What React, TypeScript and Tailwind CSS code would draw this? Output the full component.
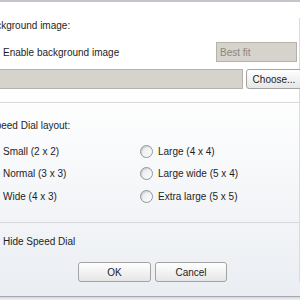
import React from "react";

const font = { fontFamily: '"Liberation Sans", Arial, sans-serif' };

function Radio() {
  return (
    <span className="inline-block h-[13px] w-[13px] shrink-0 rounded-full border border-[#8f969e] bg-gradient-to-br from-[#e4e6e9] to-white shadow-[inset_1px_1px_1px_rgba(0,0,0,0.12)]" />
  );
}

function Check() {
  return (
    <span className="inline-block h-[13px] w-[13px] shrink-0 border border-[#8f969e] bg-gradient-to-br from-[#e4e6e9] to-white" />
  );
}

function Btn({ children, w }: { children: React.ReactNode; w: string }) {
  return (
    <button
      className={`${w} h-[20px] rounded-[3px] border border-[#a3a3a3] bg-gradient-to-b from-white to-[#e6e6e6] text-[10px] text-[#222]`}
    >
      {children}
    </button>
  );
}

const left = ["Small (2 x 2)", "Normal (3 x 3)", "Wide (4 x 3)"];
const right = ["Large (4 x 4)", "Large wide (5 x 4)", "Extra large (5 x 5)"];

export default function App() {
  return (
    <div
      style={font}
      className="relative h-[300px] w-[300px] overflow-hidden bg-gradient-to-b from-white from-30% to-[#eaedf2] text-[10px] text-[#1e1e1e]"
    >
      <div className="h-[2px] bg-[#9aa0aa] opacity-60" />
      <div className="border-r border-[#d9dbe0]">
        {/* background image section */}
        <div className="ml-[-16px] mt-[16px] h-[16px] leading-[16px]">Background image:</div>
        <div className="mt-[8px] flex h-[20px] items-center justify-between">
          <div className="ml-[-17px] flex items-center gap-[7px]">
            <Check />
            <span>Enable background image</span>
          </div>
          <div className="mr-[2px] flex h-[20px] w-[81px] items-center border border-[#b5b2ab] bg-[#d6d3cd] px-[3px] text-[#8a8782]">
            Best fit
          </div>
        </div>
        <div className="mt-[7px] flex h-[20px] gap-[3px]">
          <div className="ml-[-10px] h-[20px] flex-1 border border-[#b5b2ab] bg-[#d6d3cd]" />
          <Btn w="w-[56px] mr-[-3px]">Choose...</Btn>
        </div>
        <div className="mt-[13px] h-[1px] bg-[#d5d8dd]" />

        {/* layout section */}
        <div className="ml-[-11px] mt-[15px] h-[16px] leading-[16px]">Speed Dial layout:</div>
        <div className="mt-[9px] grid grid-cols-[140px_1fr] gap-y-[6.5px]">
          {left.map((l, i) => (
            <React.Fragment key={l}>
              <div className="ml-[-17px] flex h-[16px] items-center gap-[7px]">
                <Radio />
                <span>{l}</span>
              </div>
              <div className="flex h-[16px] items-center gap-[5px]">
                <Radio />
                <span>{right[i]}</span>
              </div>
            </React.Fragment>
          ))}
        </div>
        <div className="mt-[18px] h-[1px] bg-[#d5d8dd]" />

        <div className="ml-[-17px] mt-[10px] flex h-[16px] items-center gap-[7px]">
          <Check />
          <span>Hide Speed Dial</span>
        </div>
        <div className="mt-[13px] flex h-[20px] gap-[4px] pl-[78px]">
          <Btn w="w-[73px]">OK</Btn>
          <Btn w="w-[72px]">Cancel</Btn>
        </div>
      </div>
      <div className="absolute bottom-0 left-0 right-0 h-[4px] border-t border-[#a4a7ad] bg-gradient-to-b from-[#d4d6da] to-[#f0f1f3]" />
    </div>
  );
}
